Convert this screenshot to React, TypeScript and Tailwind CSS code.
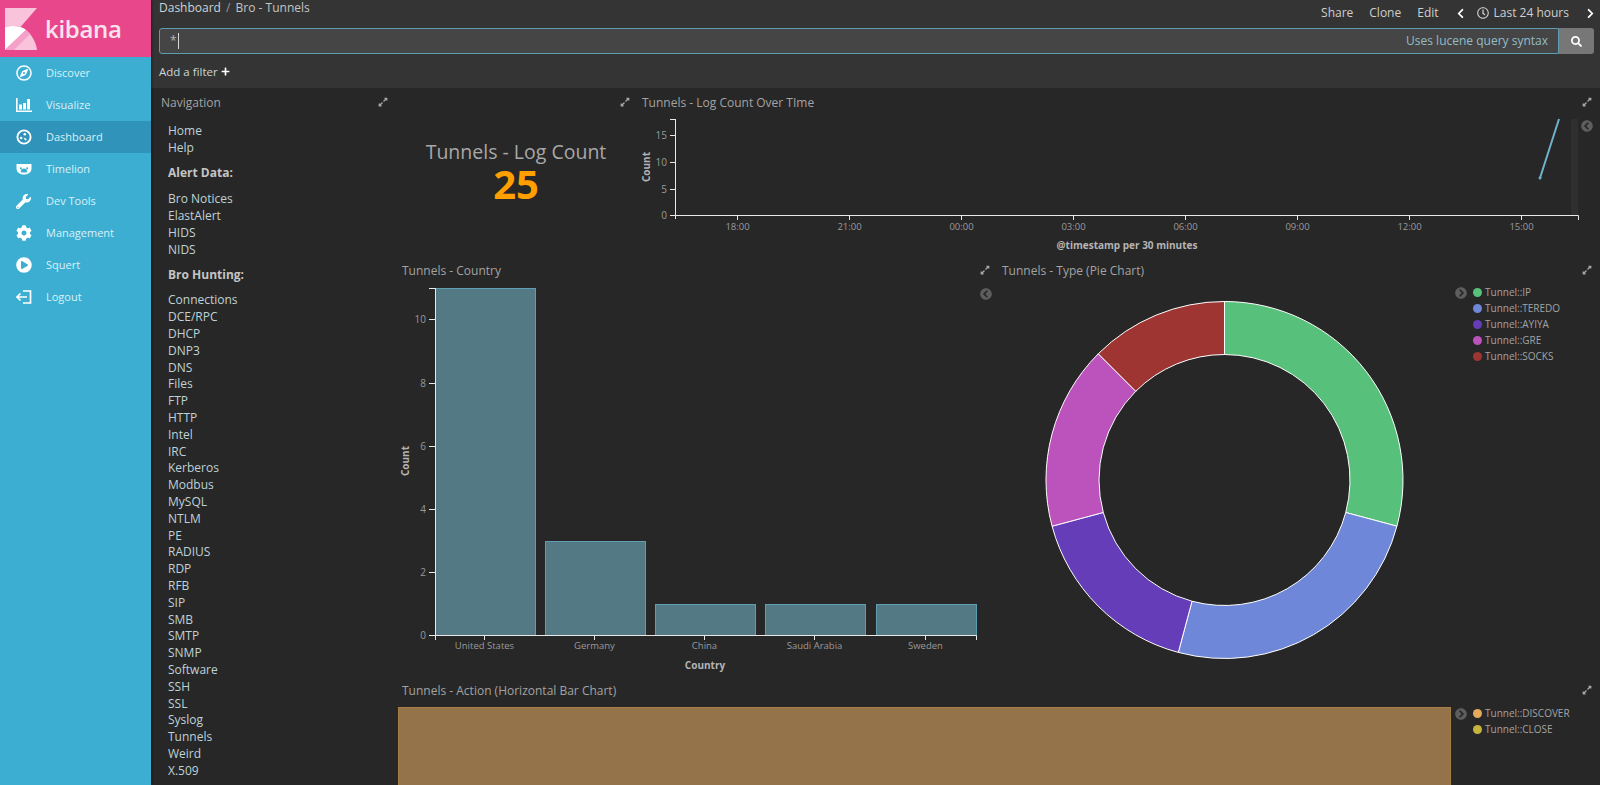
import { FaRegCompass, FaWrench, FaCog, FaPlayCircle, FaSearch, FaRegClock, FaChevronLeft, FaChevronRight, FaPlus, FaChevronCircleLeft, FaChevronCircleRight, FaExpandAlt } from "react-icons/fa"
import type { ReactNode } from "react"

const ChartIcon = () => (
  <svg viewBox="0 0 16 16" className="w-4 h-4" fill="currentColor">
    <path d="M0 1h1.600v12.400H16V15H0z" />
    <rect x="3" y="7.500" width="3" height="5" />
    <rect x="7" y="6" width="3" height="6.500" />
    <rect x="11" y="2" width="3" height="10.500" />
  </svg>
)

const DashIcon = () => (
  <svg viewBox="0 0 16 16" className="w-4 h-4">
    <circle cx="8" cy="8" r="6.600" fill="none" stroke="currentColor" strokeWidth="1.900" />
    <circle cx="5.200" cy="9" r="1.300" fill="currentColor" />
    <circle cx="8.800" cy="5.200" r="1.300" fill="currentColor" />
    <path d="M7.500 8.500l3.400 1.600-1.600 1.600z" fill="currentColor" />
  </svg>
)

const BearIcon = () => (
  <svg viewBox="0 0 16 16" className="w-4 h-4">
    <path fillRule="evenodd" fill="currentColor" d="M0.500 3h15v4.500c0 3.600-3 6-7.500 6s-7.500-2.400-7.500-6zM4.800 6.300a1 1 0 1 0 0.010 0zM11.200 6.300a1 1 0 1 0 0.010 0zM8 7.500c-2 0-3.200 1.300-3.200 3 0 .6.400.9 1 .9h4.400c.6 0 1-.3 1-.9 0-1.700-1.200-3-3.200-3z" />
  </svg>
)

const LogoutIcon = () => (
  <svg viewBox="0 0 16 16" className="w-4 h-4" fill="none" stroke="currentColor" strokeWidth="1.700">
    <path d="M7 2h7.500v12H7" />
    <path d="M11 8H1M4.500 4.500L1 8l3.500 3.500" />
  </svg>
)

const navItems: { label: string; icon: ReactNode; active?: boolean }[] = [
  { label: "Discover", icon: <FaRegCompass size={16} /> },
  { label: "Visualize", icon: <ChartIcon /> },
  { label: "Dashboard", icon: <DashIcon />, active: true },
  { label: "Timelion", icon: <BearIcon /> },
  { label: "Dev Tools", icon: <FaWrench size={15} /> },
  { label: "Management", icon: <FaCog size={16} /> },
  { label: "Squert", icon: <FaPlayCircle size={16} /> },
  { label: "Logout", icon: <LogoutIcon /> },
]

const hunting = ["Connections", "DCE/RPC", "DHCP", "DNP3", "DNS", "Files", "FTP", "HTTP", "Intel", "IRC", "Kerberos", "Modbus", "MySQL", "NTLM", "PE", "RADIUS", "RDP", "RFB", "SIP", "SMB", "SMTP", "SNMP", "Software", "SSH", "SSL", "Syslog", "Tunnels", "Weird", "X.509"]

const bars = [
  { name: "United States", x: 43, w: 100, top: 288 },
  { name: "Germany", x: 153, w: 100, top: 541 },
  { name: "China", x: 263, w: 100, top: 604 },
  { name: "Saudi Arabia", x: 373, w: 100, top: 604 },
  { name: "Sweden", x: 484, w: 100, top: 604 },
]

const slices = [
  { name: "Tunnel::IP", color: "#57c17b", from: 0, to: 105 },
  { name: "Tunnel::TEREDO", color: "#6f87d8", from: 105, to: 195 },
  { name: "Tunnel::AYIYA", color: "#663db8", from: 195, to: 255 },
  { name: "Tunnel::GRE", color: "#bc52bc", from: 255, to: 315 },
  { name: "Tunnel::SOCKS", color: "#9e3533", from: 315, to: 360 },
]

function arc(cx: number, cy: number, r: number, R: number, from: number, to: number) {
  const pt = (rad: number, a: number) => {
    const t = (a * Math.PI) / 180
    return `${(cx + rad * Math.sin(t)).toFixed(2)} ${(cy - rad * Math.cos(t)).toFixed(2)}`
  }
  const large = to - from > 180 ? 1 : 0
  return `M${pt(R, from)}A${R} ${R} 0 ${large} 1 ${pt(R, to)}L${pt(r, to)}A${r} ${r} 0 ${large} 0 ${pt(r, from)}Z`
}

function PanelTitle({ title, pad = "pr-[8px]" }: { title?: string; pad?: string }) {
  return (
    <div className={`h-7 flex items-center justify-between pl-[10px] shrink-0 ${pad}`}>
      <span className="text-[12px] text-[#a3a3a3] pt-[2px]">{title}</span>
      <FaExpandAlt size={10} className="text-[#a8a8a8]" />
    </div>
  )
}

function Legend({ items, className = "" }: { items: { name: string; color: string }[]; className?: string }) {
  return (
    <div className={`flex gap-[6px] pl-[3px] ${className}`}>
      <FaChevronCircleRight size={12} className="text-[#5e5e5e] mt-[3px]" />
      <ul>
        {items.map((item) => (
          <li key={item.name} className="h-4 flex items-center gap-[3px] text-[10px] text-[#a3a3a3]">
            <span className="w-[9px] h-[9px] rounded-full" style={{ background: item.color }} />
            {item.name}
          </li>
        ))}
      </ul>
    </div>
  )
}

export default function App() {
  return (
    <div className="flex h-[785px] overflow-hidden bg-[#272727] font-['Open_Sans',sans-serif]">
      <aside className="w-[151px] shrink-0 bg-[#3caed2] text-[#d9f1f8] shadow-[1px_0_2px_rgba(0,0,0,0.4)] z-10">
        <div className="h-[57px] bg-[#e8488b] flex items-center gap-[8px] pl-[5px]">
          <svg viewBox="0 0 32 42" className="w-8 h-[42px]">
            <path d="M0 0H32L15.500 19C10.500 17.500 5 17.500 0 19Z" fill="#f9c3dc" />
            <path d="M0 19C5 17.500 10.500 17.500 15.500 19C17.500 19.700 19.500 20.700 21 22L0 42Z" fill="#ffffff" />
            <path d="M21 22C27 27 31 34 32 42H0Z" fill="#f9c3dc" />
            <path d="M15.500 27L21 22L25 26L9 42H0Z" fill="#f4a0c8" />
          </svg>
          <span className="text-[24px] leading-none font-semibold text-[#fbe3ee] tracking-[-0.3px]">kibana</span>
        </div>
        {navItems.map((item) => (
          <div key={item.label} className={`h-8 flex items-center ${item.active ? "bg-[#2f93ba]" : ""}`}>
            <span className="w-[46px] flex justify-center pl-[1px] text-white">{item.icon}</span>
            <span className="text-[11px]">{item.label}</span>
          </div>
        ))}
      </aside>

      <main className="flex-1 min-w-0 flex flex-col">
        <header className="h-[88px] shrink-0 bg-[#343434] text-[#c8d6da]">
          <div className="h-7 flex items-start justify-between pl-2 pr-[4px] text-[12px]">
            <div className="-mt-[1px]">
              Dashboard <span className="text-[#9a9a9a] mx-[2px]">/</span> <span className="text-[#c4c4c4]">Bro - Tunnels</span>
            </div>
            <div className="flex items-center gap-[16px] text-[#cfcfcf] pt-[4px]">
              <span>Share</span>
              <span>Clone</span>
              <span>Edit</span>
              <FaChevronLeft size={11} className="text-white -mr-[5px]" />
              <span className="flex items-center gap-[5px]">
                <FaRegClock size={12} />
                Last 24 hours
              </span>
              <FaChevronRight size={11} className="text-white" />
            </div>
          </div>
          <div className="flex h-[26px] mx-2 mr-[6px]">
            <div className="flex-1 flex items-center justify-between bg-[#454545] border border-[#5c9db2] rounded-l-[3px] pl-[10px] pr-[10px] text-[12px]">
              <span className="text-[#b8b8b8] border-r border-[#d8d8d8] pr-[1px] leading-4">*</span>
              <span className="text-[#94bcc7]">Uses lucene query syntax</span>
            </div>
            <div className="w-[35px] flex items-center justify-center bg-[#777777] rounded-r-[3px]">
              <FaSearch size={11} className="text-white" />
            </div>
          </div>
          <div className="flex items-center gap-[3px] pl-2 pt-[9px] text-[11.500px] text-[#c8d6da]">
            Add a filter <FaPlus size={9} className="text-white" />
          </div>
        </header>

        <div className="flex-1 flex min-h-0">
          <section className="w-[241px] shrink-0">
            <PanelTitle title="Navigation" pad="pr-[4px]" />
            <div className="pl-[17px] pt-[7px] text-[12px] leading-[16.800px] text-[#bfd2d7]">
              <div>Home</div>
              <div>Help</div>
              <div className="mt-2 mb-[10px] font-bold text-[#c4c4c4]">Alert Data:</div>
              <div>Bro Notices</div>
              <div>ElastAlert</div>
              <div>HIDS</div>
              <div>NIDS</div>
              <div className="mt-2 mb-[9px] font-bold text-[#c4c4c4]">Bro Hunting:</div>
              {hunting.map((name) => (
                <div key={name}>{name}</div>
              ))}
            </div>
          </section>

          <div className="flex-1 min-w-0 flex flex-col">
            <div className="h-[168px] flex shrink-0">
              <section className="w-[240px] shrink-0">
                <PanelTitle pad="pr-[2px]" />
                <div className="flex flex-col items-center pt-[22px] pl-[8px]">
                  <div className="text-[19.500px] leading-[27px] text-[#a8a8a8]">Tunnels - Log Count</div>
                  <div className="mt-[1px] text-[40px] leading-[36px] font-bold text-[#ff9f00]">25</div>
                </div>
              </section>
              <section className="flex-1 min-w-0">
                <PanelTitle title="Tunnels - Log Count Over TIme" />
                <div className="flex">
                  <svg width="950" height="142" className="font-['Open_Sans',sans-serif]">
                    <rect x="939" y="3" width="7" height="96" fill="#2f2f2f" />
                    <path d="M908 62L927 3" stroke="#6fb2cc" strokeWidth="2" fill="none" />
                    <circle cx="908" cy="62" r="1.500" fill="#6fb2cc" />
                    <path d="M43.500 3V103M38 3.500H44M38 99.500H946.500M946.500 99.500V104" stroke="#e8e8e8" fill="none" />
                    {[
                      ["15", 19],
                      ["10", 46],
                      ["5", 73],
                      ["0", 99],
                    ].map(([t, y]) => (
                      <g key={t}>
                        <path d={`M38 ${Number(y) + 0.5}H44`} stroke="#e8e8e8" />
                        <text x="35" y={Number(y) + 3.500} textAnchor="end" fontSize="10" fill="#9a9a9a">{t}</text>
                      </g>
                    ))}
                    {["18:00", "21:00", "00:00", "03:00", "06:00", "09:00", "12:00", "15:00"].map((t, i) => (
                      <g key={t}>
                        <path d={`M${105.500 + i * 112} 100V104`} stroke="#e8e8e8" />
                        <text x={105.500 + i * 112} y="114" textAnchor="middle" fontSize="9.500" fill="#9a9a9a">{t}</text>
                      </g>
                    ))}
                    <text transform="translate(18 51) rotate(-90)" textAnchor="middle" fontSize="10" fontWeight="700" fill="#b4b4b4">Count</text>
                    <text x="495" y="133" textAnchor="middle" fontSize="10" fontWeight="700" fill="#b4b4b4">@timestamp per 30 minutes</text>
                  </svg>
                  <FaChevronCircleLeft size={12} className="text-[#5e5e5e] ml-[-1px] mt-[4px]" />
                </div>
              </section>
            </div>

            <div className="h-[420px] flex shrink-0">
              <section className="w-[600px] shrink-0">
                <PanelTitle title="Tunnels - Country" pad="pr-[2px]" />
                <svg width="600" height="392" className="font-['Open_Sans',sans-serif]">
                  {bars.map((b) => (
                    <rect key={b.name} x={b.x + 0.5} y={b.top - 284 + 0.5} width={b.w} height={635 - b.top} fill="#537a84" stroke="#5f9db3" />
                  ))}
                  <path d="M43.500 4V356M37 4.500H44M37 351.500H584.500V356" stroke="#e8e8e8" fill="none" />
                  {[
                    ["10", 35],
                    ["8", 99],
                    ["6", 162],
                    ["4", 225],
                    ["2", 288],
                    ["0", 351],
                  ].map(([t, y]) => (
                    <g key={t}>
                      <path d={`M37 ${Number(y) + 0.5}H43`} stroke="#e8e8e8" />
                      <text x="34" y={Number(y) + 3.500} textAnchor="end" fontSize="10" fill="#9a9a9a">{t}</text>
                    </g>
                  ))}
                  {bars.map((b) => (
                    <g key={b.name}>
                      <path d={`M${b.x + 49.5} 352V356`} stroke="#e8e8e8" />
                      <text x={b.x + 49.5} y="365" textAnchor="middle" fontSize="9.500" fill="#9a9a9a">{b.name}</text>
                    </g>
                  ))}
                  <text transform="translate(17 177) rotate(-90)" textAnchor="middle" fontSize="10" fontWeight="700" fill="#b4b4b4">Count</text>
                  <text x="313" y="385" textAnchor="middle" fontSize="10" fontWeight="700" fill="#b4b4b4">Country</text>
                </svg>
              </section>
              <section className="flex-1 min-w-0">
                <PanelTitle title="Tunnels - Type (Pie Chart)" />
                <div className="flex">
                  <div className="w-[460px] shrink-0 relative">
                    <FaChevronCircleLeft size={12} className="text-[#5e5e5e] mt-[4px] absolute -left-[12px]" />
                    <svg width="460" height="392">
                      {slices.map((s) => (
                        <path key={s.name} d={arc(232.5, 196, 125.5, 178.5, s.from, s.to)} fill={s.color} stroke="#ffffff" strokeWidth="1" />
                      ))}
                    </svg>
                  </div>
                  <Legend items={slices} />
                </div>
              </section>
            </div>

            <section className="flex-1 min-h-0 flex flex-col">
              <PanelTitle title="Tunnels - Action (Horizontal Bar Chart)" />
              <div className="flex flex-1 min-h-0">
                <div className="w-[1060px] shrink-0 pl-[6px] pr-px pt-[3px]">
                  <div className="h-[100px] bg-[#94724a] border border-b-0 border-[#a67d44]" />
                </div>
                <Legend
                  className="pt-[1px]"
                  items={[
                    { name: "Tunnel::DISCOVER", color: "#e5a95c" },
                    { name: "Tunnel::CLOSE", color: "#c7b43c" },
                  ]}
                />
              </div>
            </section>
          </div>
        </div>
      </main>
    </div>
  )
}
